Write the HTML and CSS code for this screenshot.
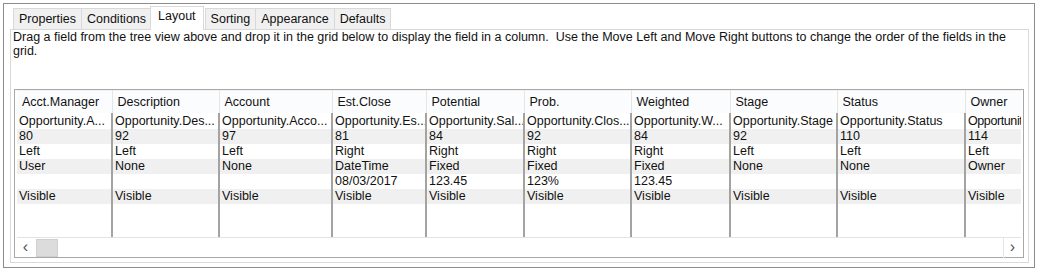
FILE: index.html
```html
<!DOCTYPE html>
<html lang="en">
<head>
    <meta charset="UTF-8">
    <title>Layout</title>
<link rel="stylesheet" href="styles.css">
</head>
<body>
<div class="frame">
    <div class="tabs">
        <span class="tab">Properties</span>
        <span class="tab">Conditions</span>
        <span class="tab active">Layout</span>
        <span class="tab">Sorting</span>
        <span class="tab">Appearance</span>
        <span class="tab">Defaults</span>
    </div>
    <div class="panel">
        <div class="hint">Drag a field from the tree view above and drop it in the grid below to display the field in a column.&nbsp; Use the Move Left and Move Right buttons to change the order of the fields in the grid.</div>

        <div class="grid">
            <div class="grid_view">
            <table>
                <colgroup>
                    <col style="width:95px"><col style="width:107px"><col style="width:113px"><col style="width:94px"><col style="width:98px">
                    <col style="width:107px"><col style="width:99px"><col style="width:107px"><col style="width:128px"><col style="width:58px">
                </colgroup>
                <tr class="head">
                    <th>Acct.Manager</th><th>Description</th><th>Account</th><th>Est.Close</th><th>Potential</th>
                    <th>Prob.</th><th>Weighted</th><th>Stage</th><th>Status</th><th>Owner</th>
                </tr>
                <tr class="first">
                    <td>Opportunity.A...</td><td>Opportunity.Des...</td><td>Opportunity.Acco...</td><td>Opportunity.Es...</td><td>Opportunity.Sal...</td>
                    <td>Opportunity.Clos...</td><td>Opportunity.W...</td><td>Opportunity.Stage</td><td>Opportunity.Status</td><td class="narrow">Opportunit</td>
                </tr>
                <tr class="alt">
                    <td>80</td><td>92</td><td>97</td><td>81</td><td>84</td><td>92</td><td>84</td><td>92</td><td>110</td><td>114</td>
                </tr>
                <tr>
                    <td>Left</td><td>Left</td><td>Left</td><td>Right</td><td>Right</td><td>Right</td><td>Right</td><td>Left</td><td>Left</td><td>Left</td>
                </tr>
                <tr class="alt">
                    <td>User</td><td>None</td><td>None</td><td>DateTime</td><td>Fixed</td><td>Fixed</td><td>Fixed</td><td>None</td><td>None</td><td>Owner</td>
                </tr>
                <tr>
                    <td></td><td></td><td></td><td>08/03/2017</td><td>123.45</td><td>123%</td><td>123.45</td><td></td><td></td><td></td>
                </tr>
                <tr class="alt">
                    <td>Visible</td><td>Visible</td><td>Visible</td><td>Visible</td><td>Visible</td><td>Visible</td><td>Visible</td><td>Visible</td><td>Visible</td><td>Visible</td>
                </tr>
                <tr class="filler">
                    <td></td><td></td><td></td><td></td><td></td><td></td><td></td><td></td><td></td><td></td>
                </tr>
            </table>
            </div>
            <div class="scrollbar">
                <span class="arrow">&lsaquo;</span>
                <span class="thumb"></span>
                <span class="track"></span>
                <span class="arrow">&rsaquo;</span>
            </div>
        </div>
    </div>
</div>
</body>
</html>
```

FILE: styles.css
```css
body{
    margin: 0;
    background-color: white;
    font-family: 'Liberation Sans', Arial, sans-serif;
    font-size: 12.5px;
    color: #111111;
}

.frame{
    margin: 3px 0 0 3px;
    width: 1032px;
    height: 265px;
    border: 1px solid #8c8c8c;
    padding: 0 5px 0 6px;
    box-sizing: border-box;
}

.tabs{
    display: flex;
    align-items: flex-end;
    height: 25px;
    padding-left: 3px;
}

.tab{
    height: 21px;
    line-height: 20px;
    padding: 0 5px;
    background-color: #f0f0f0;
    border: 1px solid #d9d9d9;
    border-bottom: none;
    margin-right: -1px;
    box-sizing: border-box;
}

.tab.active{
    height: 24px;
    line-height: 18px;
    background-color: white;
    border-color: #d9d9d9;
    position: relative;
    top: 1px;
    padding: 0 7px;
    margin: 0 1px 0 -1px;
}

.panel{
    height: 234px;
    border: 1px solid #d9d9d9;
    padding: 0 3px 0 2px;
    box-sizing: border-box;
}

.hint{
    line-height: 14px;
    height: 59px;
    padding-right: 4px;
}

.grid{
    border: 1px solid #a8a8a8;
    height: 169px;
    margin-left: 1px;
    margin-right: 1px;
    padding: 0 2px;
    box-sizing: border-box;
}

.grid_view{
    height: 147px;
    overflow: hidden;
    border-bottom: 1px solid #e3e3e3;
}

table{
    border-collapse: collapse;
    table-layout: fixed;
    width: 1006px;
}

th, td{
    padding: 0 0 0 2px;
    white-space: nowrap;
    overflow: hidden;
    text-align: left;
    font-weight: normal;
}

.head th{
    height: 22px;
    padding-left: 5px;
    background-color: #fbfcfe;
    border-right: 1px solid #e5e5e5;
    border-top: 1px solid #f2f2f2;
}

td{
    height: 15px;
    line-height: 13px;
    border-right: 2px solid #a3a3a3;
}

td:last-child, th:last-child{
    border-right: none;
}

td.narrow{
    letter-spacing: -0.4px;
}

.first td{
    height: 16px;
}

.alt td{
    background-color: #f0f0f0;
}

.filler td{
    height: 34px;
}

.scrollbar{
    display: flex;
    height: 20px;
}

.arrow{
    width: 17px;
    text-align: center;
    line-height: 18px;
    font-size: 16px;
    color: #555;
}

.thumb{
    width: 20px;
    margin: 1px 2px;
    background-color: #dcdcdc;
    border: 1px solid #cfcfcf;
}

.track{
    flex: 1;
    border-right: 1px solid #e6e6e6;
}
```
